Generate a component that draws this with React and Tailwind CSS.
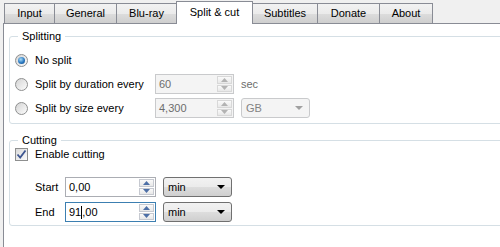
import React from 'react';

const font = { fontFamily: '"Liberation Sans", Arial, sans-serif' };

const tabs = [
  { label: 'Input', w: 'w-[51px]' },
  { label: 'General', w: 'w-[63px]' },
  { label: 'Blu-ray', w: 'w-[61px]' },
  { label: 'Split & cut', w: 'w-[77px]', active: true },
  { label: 'Subtitles', w: 'w-[66px]' },
  { label: 'Donate', w: 'w-[63px]' },
  { label: 'About', w: 'w-[54px]' },
];

const Radio = ({ checked }) => (
  <span className="w-[13px] h-[13px] rounded-full border border-[#8e8f8f] bg-[linear-gradient(135deg,#d4d4d4,#fcfcfc)] flex items-center justify-center shrink-0">
    {checked && (
      <span className="w-[7px] h-[7px] rounded-full bg-[radial-gradient(circle_at_40%_35%,#a8dcf8,#2a78c0_55%,#17487f)]" />
    )}
  </span>
);

const Checkbox = () => (
  <span className="w-[13px] h-[13px] border border-[#8e8f8f] bg-[linear-gradient(135deg,#dadada,#fbfbfb)] flex items-center justify-center shrink-0">
    <svg width="11" height="11" viewBox="0 0 11 11">
      <path d="M1.5 5.5 L4.2 8.5 L9.5 1.5" fill="none" stroke="#3d5590" strokeWidth="1.8" />
    </svg>
  </span>
);

// Spin button arrow
const Arrow = ({ up, color }) => (
  <svg width="7" height="4" viewBox="0 0 7 4">
    <path d={up ? 'M0 4 L3.5 0 L7 4 Z' : 'M0 0 L3.5 4 L7 0 Z'} fill={color} />
  </svg>
);

const SpinBox = ({ value, width, disabled, focused, caret }) => {
  const box = disabled
    ? 'border-[#c9cacc] bg-[#f4f4f4] text-[#6d6d6d]'
    : focused
      ? 'border-[#3c7fb1] bg-white text-black'
      : 'border-[#abadb3] bg-white text-black';
  const arrow = disabled ? '#b3b3b3' : '#4d6fa6';
  return (
    <div className={`flex h-[20px] border ${box} ${width}`}>
      <div className="flex-1 pl-[3px] flex items-center">
        {caret ? (
          <>
            {value.slice(0, 2)}
            <span className="w-px h-[13px] bg-black" />
            {value.slice(2)}
          </>
        ) : (
          value
        )}
      </div>
      <div className="w-[16px] flex flex-col py-px pr-px gap-px">
        <div className={`flex-1 flex items-center justify-center border ${disabled ? 'border-[#d8d8d8]' : 'border-[#c6c9d0]'} bg-[linear-gradient(#fafafa,#e8e8e8)]`}>
          <Arrow up color={arrow} />
        </div>
        <div className={`flex-1 flex items-center justify-center border ${disabled ? 'border-[#d8d8d8]' : 'border-[#c6c9d0]'} bg-[linear-gradient(#fafafa,#e8e8e8)]`}>
          <Arrow color={arrow} />
        </div>
      </div>
    </div>
  );
};

const Combo = ({ value, disabled }) => (
  <div
    className={`w-[69px] h-[20px] flex items-center justify-between pl-[4px] pr-[6px] border rounded-[3px] ${
      disabled
        ? 'border-[#c9cacc] bg-[#f4f4f4] text-[#838383]'
        : 'border-[#707070] bg-[linear-gradient(#f2f2f2,#ebebeb_50%,#dddddd_51%,#cfcfcf)] text-black'
    }`}
  >
    <span>{value}</span>
    <svg width="8" height="4" viewBox="0 0 8 4">
      <path d="M0 0 L4 4 L8 0 Z" fill={disabled ? '#a0a0a0' : '#000'} />
    </svg>
  </div>
);

export default function App() {
  return (
    <div className="w-[500px] h-[247px] bg-[#f0f0f0] flex flex-col overflow-hidden text-[11px] leading-[13px] text-black" style={font}>
      {/* Tab strip */}
      <div className="flex items-end h-[23px] pl-[4px] shrink-0">
        {tabs.map((t, i) => (
          <div
            key={t.label}
            className={`${t.w} ${i > 0 ? '-ml-px' : ''} flex items-center justify-center border-t border-l border-r border-[#898c95] ${
              t.active
                ? 'h-[23px] -mb-px relative z-10 bg-white pb-[2px]'
                : 'h-[20px] bg-[linear-gradient(#f2f2f2,#ebebeb_50%,#dddddd_51%,#cfcfcf)]'
            }`}
          >
            {t.label}
          </div>
        ))}
      </div>

      {/* Tab pane */}
      <div className="flex-1 ml-[3px] border-l border-t border-[#898c95] bg-white pl-[5px] pt-[6px]">
        <fieldset className="border border-[#d5dfe5] rounded-[3px] -mr-[10px] pl-[5px] pt-[7px] pb-[5px] flex flex-col gap-[4px]">
          <legend className="ml-[3px] px-[4px] leading-[13px]">Splitting</legend>
          <div className="h-[20px] flex items-center gap-[7px]">
            <Radio checked />
            <span>No split</span>
          </div>
          <div className="h-[20px] flex items-center">
            <Radio />
            <span className="ml-[7px] w-[120px]">Split by duration every</span>
            <SpinBox value="60" width="w-[79px]" disabled />
            <span className="ml-[7px] text-[#6d6d6d]">sec</span>
          </div>
          <div className="h-[20px] flex items-center">
            <Radio />
            <span className="ml-[7px] w-[120px]">Split by size every</span>
            <SpinBox value="4,300" width="w-[79px]" disabled />
            <span className="ml-[7px]">
              <Combo value="GB" disabled />
            </span>
          </div>
        </fieldset>

        <fieldset className="mt-[10px] border border-[#d5dfe5] rounded-[3px] -mr-[10px] pl-[5px] pt-[1px] pb-[3px] flex flex-col">
          <legend className="ml-[3px] px-[4px] leading-[13px]">Cutting</legend>
          <div className="h-[13px] flex items-center gap-[7px]">
            <Checkbox />
            <span>Enable cutting</span>
          </div>
          <div className="mt-[16px] flex flex-col gap-[5px] pl-[20px]">
            <div className="h-[20px] flex items-center">
              <span className="w-[30px]">Start</span>
              <SpinBox value="0,00" width="w-[91px]" />
              <span className="ml-[7px]">
                <Combo value="min" />
              </span>
            </div>
            <div className="h-[20px] flex items-center">
              <span className="w-[30px]">End</span>
              <SpinBox value="91,00" width="w-[91px]" focused caret />
              <span className="ml-[7px]">
                <Combo value="min" />
              </span>
            </div>
          </div>
        </fieldset>
      </div>
    </div>
  );
}
